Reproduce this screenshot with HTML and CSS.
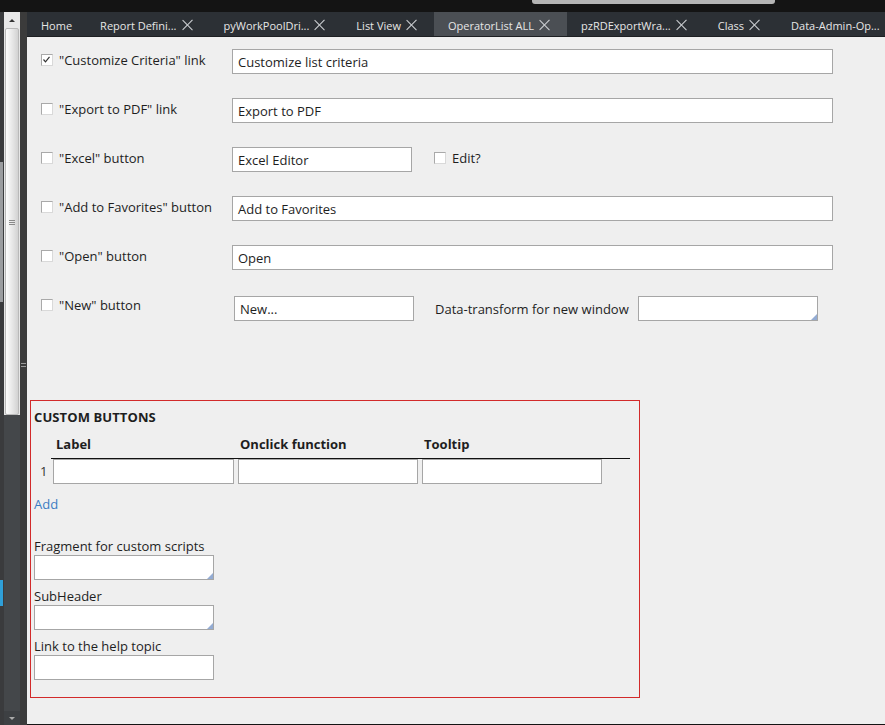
FILE: index.html
```html
<!DOCTYPE html>
<html>
<head>
<meta charset="utf-8">
<link rel="stylesheet" href="styles.css">
</head>
<body>
<div class="topbar"><div class="hthumb"></div></div>
<div class="main">
  <div class="gutter">
    <div class="edge"><div class="edge-light"></div><div class="edge-blue"></div></div>
    <div class="vscroll">
      <div class="arrow up"><span class="tri-up"></span></div>
      <div class="thumb"><div class="grip"><i></i><i></i><i></i></div></div>
      <div class="track-rest"></div>
      <div class="arrow down"><span class="tri-down"></span></div>
    </div>
    <div class="splitter"><div class="sgrip"><i></i><i></i></div></div>
  </div>
  <div class="workspace">
    <div class="tabs">
      <div class="tab">Home</div>
      <div class="tab">Report Defini...<span class="x"></span></div>
      <div class="tab">pyWorkPoolDri...<span class="x"></span></div>
      <div class="tab">List View<span class="x"></span></div>
      <div class="tab active">OperatorList ALL<span class="x"></span></div>
      <div class="tab">pzRDExportWra...<span class="x"></span></div>
      <div class="tab">Class<span class="x"></span></div>
      <div class="tab">Data-Admin-Op...</div>
    </div>
    <div class="content">
      <div class="row">
        <div class="lbl"><span class="cb checked"><svg viewBox="0 0 11 11" width="11" height="11"><path d="M2.5 5.5 L4.5 7.8 L8.5 2.8" fill="none" stroke="#333" stroke-width="1.2"/></svg></span><span>"Customize Criteria" link</span></div>
        <div class="field w601">Customize list criteria</div>
      </div>
      <div class="row">
        <div class="lbl"><span class="cb"></span><span>"Export to PDF" link</span></div>
        <div class="field w601">Export to PDF</div>
      </div>
      <div class="row">
        <div class="lbl"><span class="cb"></span><span>"Excel" button</span></div>
        <div class="field w180">Excel Editor</div>
        <div class="edit"><span class="cb"></span><span>Edit?</span></div>
      </div>
      <div class="row">
        <div class="lbl"><span class="cb"></span><span>"Add to Favorites" button</span></div>
        <div class="field w601">Add to Favorites</div>
      </div>
      <div class="row">
        <div class="lbl"><span class="cb"></span><span>"Open" button</span></div>
        <div class="field w601">Open</div>
      </div>
      <div class="row">
        <div class="lbl"><span class="cb"></span><span>"New" button</span></div>
        <div class="field w180 shift first-shift">New...</div>
        <div class="dt">Data-transform for new window</div>
        <div class="field w180 shift resize"></div>
      </div>

      <div class="custom">
        <div class="ctitle">CUSTOM BUTTONS</div>
        <div class="thead">
          <div class="idx"></div>
          <div class="hcells">
            <div class="hc c1">Label</div>
            <div class="hc c2">Onclick function</div>
            <div class="hc c3">Tooltip</div>
          </div>
        </div>
        <div class="trow">
          <div class="idx num">1</div>
          <div class="cell c1"><div class="field w181"></div></div>
          <div class="cell c2"><div class="field w180"></div></div>
          <div class="cell c3"><div class="field w180"></div></div>
        </div>
        <div class="add">Add</div>
        <div class="flabel first">Fragment for custom scripts</div>
        <div class="field w180 resize"></div>
        <div class="flabel">SubHeader</div>
        <div class="field w180 resize"></div>
        <div class="flabel third">Link to the help topic</div>
        <div class="field w180"></div>
      </div>
    </div>
  </div>
</div>
</body>
</html>
```
FILE: styles.css
```css
* { box-sizing: border-box; }
html, body { margin: 0; padding: 0; }
body {
  width: 885px;
  height: 725px;
  overflow: hidden;
  background: #141414;
  font-family: "Open Sans", "Noto Sans", sans-serif;
  font-size: 13px;
  color: #1e1e1e;
}
.topbar {
  height: 12px;
  background: #141414;
  display: flex;
}
.hthumb {
  margin-left: 532px;
  width: 243px;
  height: 4px;
  background: #b4b4b4;
  border-radius: 0 0 3px 3px;
}
.main {
  display: flex;
  height: 713px;
}
.gutter {
  width: 27px;
  display: flex;
  flex-shrink: 0;
}
.edge {
  width: 4px;
  background: #3a3b3d;
  display: flex;
  flex-direction: column;
}
.edge-light {
  margin-top: 150px;
  height: 140px;
  width: 3px;
  background: #9a9c9f;
}
.edge-blue {
  margin-top: 278px;
  height: 26px;
  width: 3px;
  background: #2f9fd8;
}
.vscroll {
  width: 16px;
  display: flex;
  flex-direction: column;
  background: #e6e6e6;
}
.arrow {
  height: 16px;
  display: flex;
  align-items: center;
  justify-content: center;
}
.arrow.up { background: #e8e8e8; }
.arrow.down { background: #3d4043; height: 14px; }
.tri-up {
  width: 0; height: 0;
  border-left: 3px solid transparent;
  border-right: 3px solid transparent;
  border-bottom: 3px solid #333;
}
.tri-down {
  width: 0; height: 0;
  border-left: 3px solid transparent;
  border-right: 3px solid transparent;
  border-top: 3px solid #aaa;
}
.thumb {
  height: 387px;
  margin: 0 1px;
  border: 1px solid #b9b9b9;
  border-radius: 2px;
  background: linear-gradient(to right, #fdfdfd, #e4e4e4 60%, #d2d2d2);
  display: flex;
  flex-direction: column;
  align-items: center;
  padding-top: 191px;
}
.grip { display: flex; flex-direction: column; gap: 1px; }
.grip i { display: block; width: 6px; height: 1px; background: #8a8a8a; }
.track-rest { flex: 1; background: #44474a; }
.splitter {
  width: 7px;
  background: #3b3b3b;
  display: flex;
  justify-content: center;
  padding-top: 351px;
}
.sgrip { display: flex; flex-direction: column; gap: 2px; }
.sgrip i { display: block; width: 5px; height: 1px; background: #9a9a9a; }

.workspace {
  flex: 1;
  min-width: 0;
  display: flex;
  flex-direction: column;
}
.tabs {
  height: 25px;
  background: #2c3035;
  display: flex;
  align-items: stretch;
  border-bottom: 1px solid #1d1f22;
  white-space: nowrap;
  overflow: hidden;
}
.tab {
  display: flex;
  align-items: center;
  padding: 2px 14px 0 14px;
  color: #e6e6e6;
  font-size: 11px;
  flex-shrink: 0;
}
.tab.active { background: #4b4f54; }
.x {
  position: relative;
  width: 10px;
  height: 10px;
  margin-left: 6px;
  margin-right: 3px;
}
.x::before, .x::after {
  content: "";
  position: absolute;
  left: 4px;
  top: -2px;
  width: 1.3px;
  height: 14px;
  background: #cfd2d5;
  transform: rotate(45deg);
}
.x::after { transform: rotate(-45deg); }

.content {
  height: 688px;
  background: #efefef;
  border-bottom: 1px solid #141414;
  padding-top: 12px;
}
.row {
  display: flex;
  align-items: flex-start;
  height: 49px;
  padding-left: 14px;
}
.lbl {
  width: 191px;
  display: flex;
  align-items: flex-start;
  padding-top: 2px;
  line-height: 18px;
}
.cb {
  width: 12px;
  height: 12px;
  margin-top: 3px;
  margin-right: 6px;
  background: #fff;
  border: 1px solid #a9a9a9;
  border-right-color: #d9d9d9;
  border-bottom-color: #d9d9d9;
  display: flex;
  flex-shrink: 0;
}
.cb svg { display: block; margin: -1px 0 0 -1px; }
.field {
  height: 25px;
  background: #fff;
  border: 1px solid #a6a6a6;
  padding: 1px 0 0 5px;
  line-height: 22px;
  color: #1e1e1e;
  position: relative;
}
.w601 { width: 601px; }
.w180 { width: 180px; }
.w181 { width: 181px; }
.shift { margin-top: 2px; }
.first-shift { margin-left: 2px; }
.resize::after {
  content: "";
  position: absolute;
  right: 0;
  bottom: 0;
  width: 0; height: 0;
  border-left: 6px solid transparent;
  border-bottom: 6px solid #94acd3;
}
.edit {
  display: flex;
  margin-left: 22px;
  padding-top: 2px;
  line-height: 18px;
}
.edit .cb { margin-top: 3px; margin-right: 6px; }
.dt {
  margin-left: 21px;
  margin-right: 9px;
  line-height: 18px;
  padding-top: 6px;
}

.custom {
  margin: 57px 0 0 3px;
  width: 610px;
  height: 298px;
  border: 1px solid #d22a2a;
  padding: 7px 0 0 3px;
}
.ctitle {
  font-weight: bold;
  line-height: 18px;
  letter-spacing: 0.1px;
}
.thead {
  display: flex;
  margin-top: 9px;
}
.idx { width: 17px; flex-shrink: 0; }
.hcells {
  display: flex;
  width: 579px;
  border-bottom: 1px solid #111;
  padding-bottom: 5px;
}
.hc {
  font-weight: bold;
  line-height: 18px;
}
.hc.c1 { width: 185px; padding-left: 5px; }
.hc.c2 { width: 184px; padding-left: 4px; }
.hc.c3 { width: 184px; padding-left: 4px; }
.trow { display: flex; }
.num {
  line-height: 25px;
  padding-left: 6px;
  color: #333;
}
.cell { padding-left: 2px; }
.cell.c1 { width: 185px; }
.cell.c2 { width: 184px; }
.cell.c3 { width: 184px; }
.add {
  margin-top: 11px;
  line-height: 18px;
  color: #3b7dc2;
}
.flabel {
  margin-top: 7px;
  line-height: 18px;
}
.flabel.first { margin-top: 24px; }
.flabel.third { margin-top: 8px; line-height: 17px; }
```
